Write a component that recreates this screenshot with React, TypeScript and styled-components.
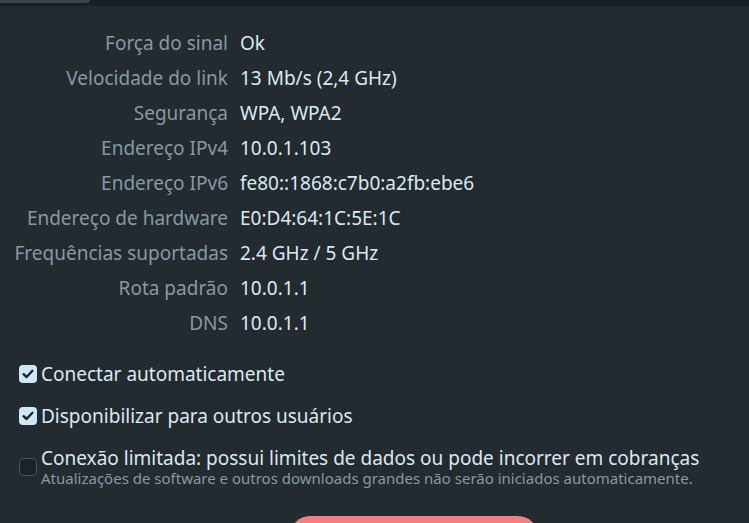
import styled, { createGlobalStyle } from "styled-components";

const GlobalStyle = createGlobalStyle`
  html, body {
    margin: 0;
    padding: 0;
    background: #232a30;
    overflow: hidden;
  }
  body {
    font-family: "Noto Sans", "Open Sans", sans-serif;
  }
`;

interface IDetail {
  label: string;
  value: string;
}

const details: IDetail[] = [
  { label: "Força do sinal", value: "Ok" },
  { label: "Velocidade do link", value: "13 Mb/s (2,4 GHz)" },
  { label: "Segurança", value: "WPA, WPA2" },
  { label: "Endereço IPv4", value: "10.0.1.103" },
  { label: "Endereço IPv6", value: "fe80::1868:c7b0:a2fb:ebe6" },
  { label: "Endereço de hardware", value: "E0:D4:64:1C:5E:1C" },
  { label: "Frequências suportadas", value: "2.4 GHz / 5 GHz" },
  { label: "Rota padrão", value: "10.0.1.1" },
  { label: "DNS", value: "10.0.1.1" },
];

const CheckIcon = () => (
  <svg width="12" height="10" viewBox="0 0 12 10" fill="none">
    <path
      d="M1.6 5.2 L4.6 8 L10.4 1.8"
      stroke="#1d2328"
      strokeWidth="2.4"
      strokeLinecap="round"
      strokeLinejoin="round"
    />
  </svg>
);

const App = () => {
  return (
    <>
      <GlobalStyle />
      <Page>
        <TopBar>
          <Tab />
        </TopBar>
        <Content>
          <DetailGrid>
            {details.map((d) => (
              <DetailRow key={d.label}>
                <Label>{d.label}</Label>
                <Value>{d.value}</Value>
              </DetailRow>
            ))}
          </DetailGrid>
          <Options>
            <OptionRow>
              <Box $checked>
                <CheckIcon />
              </Box>
              <OptionText>Conectar automaticamente</OptionText>
            </OptionRow>
            <OptionRow>
              <Box $checked>
                <CheckIcon />
              </Box>
              <OptionText>Disponibilizar para outros usuários</OptionText>
            </OptionRow>
            <OptionRow>
              <Box />
              <OptionStack>
                <OptionText>
                  Conexão limitada: possui limites de dados ou pode incorrer em cobranças
                </OptionText>
                <OptionHint>
                  Atualizações de software e outros downloads grandes não serão iniciados
                  automaticamente.
                </OptionHint>
              </OptionStack>
            </OptionRow>
          </Options>
          <ButtonRow>
            <DangerButton />
          </ButtonRow>
        </Content>
      </Page>
    </>
  );
};

const Page = styled.div`
  width: 749px;
  height: 523px;
  background: #232a30;
  overflow: hidden;
  display: flex;
  flex-direction: column;
`;

const TopBar = styled.div`
  height: 6px;
  background: #1b1f23;
  flex-shrink: 0;
`;

const Tab = styled.div`
  width: 90px;
  height: 3px;
  background: #3b434a;
  border-bottom-right-radius: 4px;
`;

const Content = styled.div`
  display: flex;
  flex-direction: column;
  padding-top: 19px;
`;

const DetailGrid = styled.div`
  display: flex;
  flex-direction: column;
`;

const DetailRow = styled.div`
  display: grid;
  grid-template-columns: 228px 1fr;
  column-gap: 12px;
  height: 35px;
  align-items: center;
  font-size: 19px;
`;

const Label = styled.span`
  text-align: right;
  color: #8799a3;
  white-space: nowrap;
`;

const Value = styled.span`
  color: #dbe8f0;
  white-space: nowrap;
`;

const Options = styled.div`
  display: flex;
  flex-direction: column;
  gap: 20px;
  padding: 23px 0 0 19px;
`;

const OptionRow = styled.div`
  display: flex;
  align-items: center;
  gap: 4px;
`;

const Box = styled.div<{ $checked?: boolean }>`
  width: 18px;
  height: 18px;
  box-sizing: border-box;
  border-radius: 4px;
  flex-shrink: 0;
  display: flex;
  align-items: center;
  justify-content: center;
  background: ${(p) => (p.$checked ? "#cfe7f6" : "#1c2226")};
  border: ${(p) => (p.$checked ? "none" : "1px solid #48535c")};
`;

const OptionStack = styled.div`
  display: flex;
  flex-direction: column;
`;

const OptionText = styled.span`
  color: #dbe8f0;
  font-size: 19px;
  line-height: 22px;
  white-space: nowrap;
`;

const OptionHint = styled.span`
  color: #8799a3;
  font-size: 15px;
  line-height: 18px;
  white-space: nowrap;
`;

const ButtonRow = styled.div`
  display: flex;
  justify-content: center;
  padding-top: 29px;
`;

const DangerButton = styled.div`
  width: 248px;
  height: 40px;
  margin-left: 79px;
  border-radius: 20px;
  background: #f47f7f;
`;

export default App;
